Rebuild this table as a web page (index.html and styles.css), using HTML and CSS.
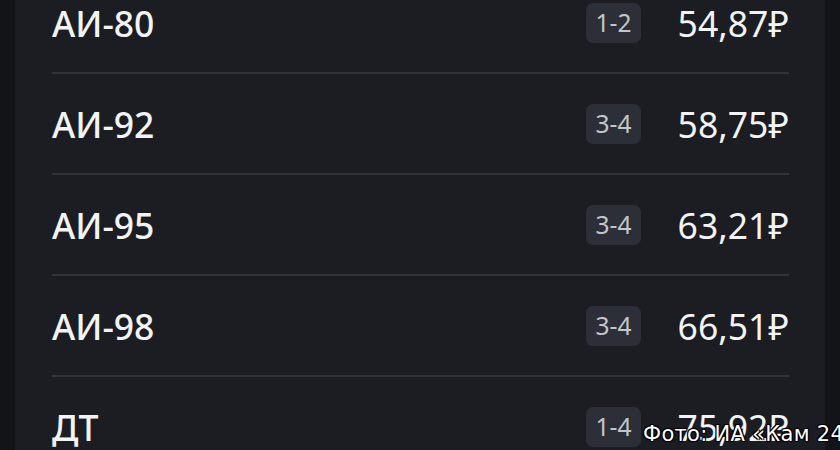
FILE: index.html
```html
<!DOCTYPE html>
<html lang="ru">
<head>
<meta charset="utf-8">
<link rel="stylesheet" href="styles.css">
</head>
<body>
<div class="page">
  <div class="card">
    <div class="row"><span class="name">АИ-80</span><span class="badge">1-2</span><span class="price">54,87₽</span></div>
    <div class="row"><span class="name">АИ-92</span><span class="badge">3-4</span><span class="price">58,75₽</span></div>
    <div class="row"><span class="name">АИ-95</span><span class="badge">3-4</span><span class="price">63,21₽</span></div>
    <div class="row"><span class="name">АИ-98</span><span class="badge">3-4</span><span class="price">66,51₽</span></div>
    <div class="row"><span class="name">ДТ</span><span class="badge">1-4</span><span class="price">75,92₽</span></div>
  </div>
  <div class="caption">Фото: ИА «Кам 24»</div>
</div>
</body>
</html>
```
FILE: styles.css
```css
html, body {
  margin: 0;
  padding: 0;
  background: #131418;
  overflow: hidden;
}
.page {
  position: relative;
  width: 840px;
  height: 450px;
  overflow: hidden;
}
.card {
  margin: -27px 0 0 15px;
  width: 810px;
  box-sizing: border-box;
  padding: 0 36px 0 37px;
  background: #1b1d23;
  font-family: "Noto Sans", sans-serif;
  color: #f2f3f5;
}
.row {
  height: 99px;
  display: flex;
  align-items: center;
  border-bottom: 2px solid #30333a;
}
.name {
  flex: 1;
  font-size: 35.5px;
  font-weight: 500;
}
.badge {
  height: 40px;
  width: 55px;
  box-sizing: border-box;
  display: flex;
  align-items: center;
  justify-content: center;
  border-radius: 7px;
  background: #2c2f37;
  color: #c3c5ca;
  font-size: 24.5px;
}
.price {
  margin-left: 36px;
  min-width: 112px;
  text-align: right;
  font-size: 35.5px;
}
.caption {
  position: absolute;
  left: 643px;
  top: 422px;
  white-space: nowrap;
  font-family: "DejaVu Sans", sans-serif;
  font-size: 21px;
  letter-spacing: 0.3px;
  color: #ffffff;
  text-shadow: -1px -1px 0 #000, 1px -1px 0 #000, -1px 1px 0 #000, 1px 1px 0 #000, 0 0 2px #000;
}
```
